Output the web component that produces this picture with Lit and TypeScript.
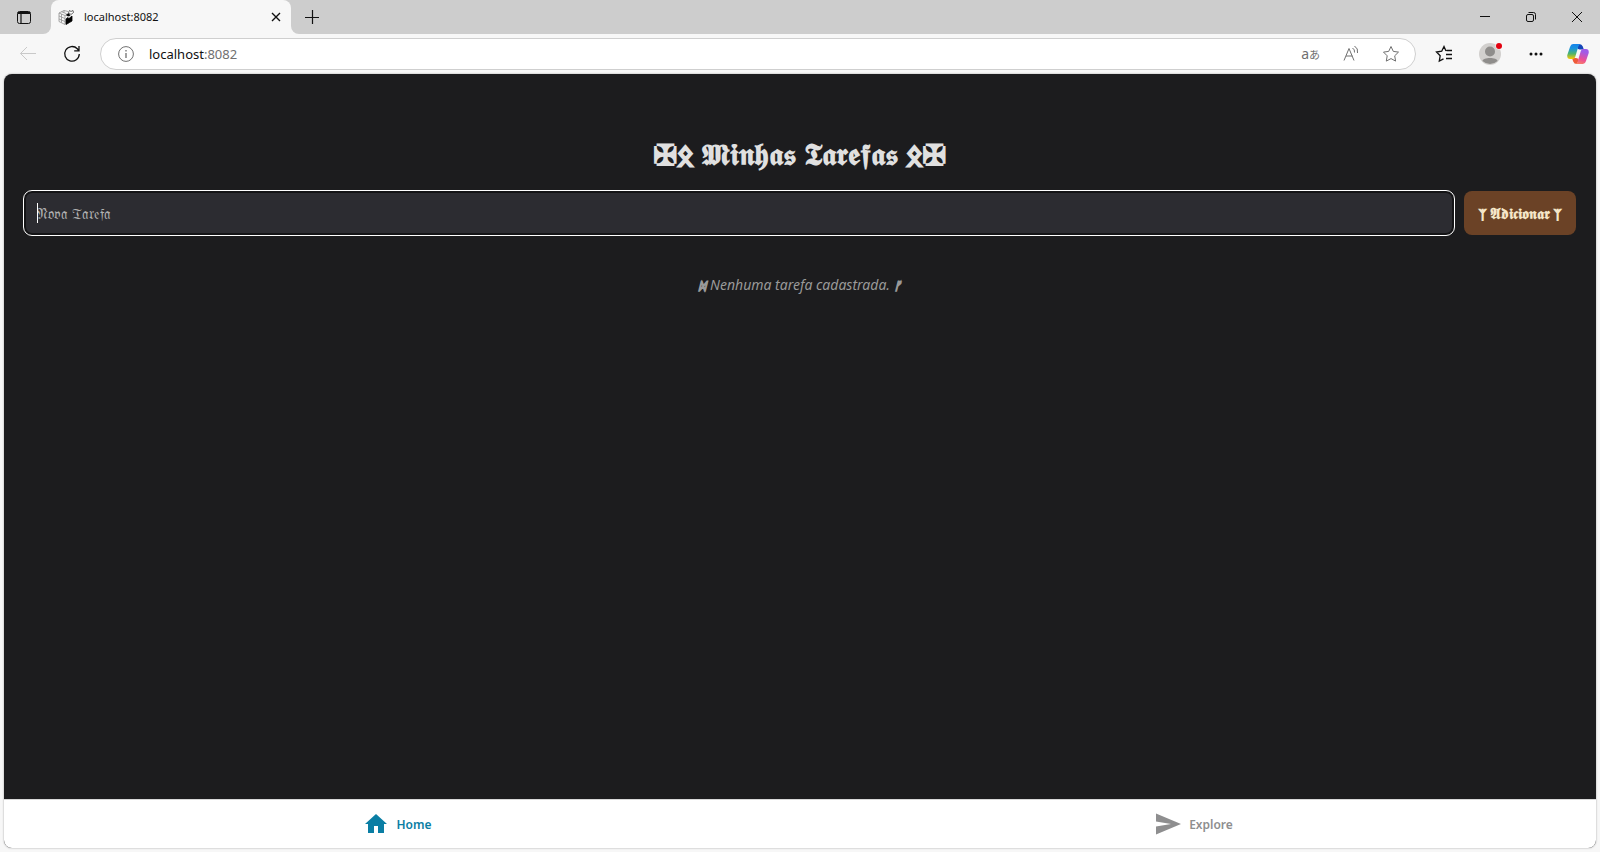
import { LitElement, html, css } from "lit";
import { customElement, query } from "lit/decorators.js";

@customElement("browser-chrome")
class BrowserChrome extends LitElement {
  static styles = css`
    :host { display: block; font-family: "Noto Sans", "Open Sans", sans-serif; color: #111; }
    button { border: 0; padding: 0; background: none; color: inherit; font: inherit; display: grid; place-items: center; }
    svg { display: block; }
    .line { fill: none; stroke: currentColor; }
    .tabs { display: flex; height: 34px; background: #f7f7f7; }
    .menu { width: 51px; border-radius: 0 0 8px 0; background: #cdcdcd; padding-right: 3px; box-sizing: border-box; }
    .tab { display: flex; align-items: center; width: 240px; box-sizing: border-box; padding: 0 9px 0 7px; gap: 9px; background: #f7f7f7; border-radius: 8px 8px 0 0; position: relative; }
    .tab::before { content: ""; position: absolute; z-index: -1; inset: 0 0 8px 0; background: #cdcdcd; }
    .tabs { isolation: isolate; }
    .title { flex: 1; font-size: 11px; line-height: 16px; padding-bottom: 1px; }
    .rest { display: flex; flex: 1; background: #cdcdcd; border-radius: 0 0 0 8px; justify-content: space-between; }
    .new { width: 42px; }
    .win { display: flex; }
    .win button { width: 46px; }
    .bar { display: flex; align-items: center; height: 40px; background: #f7f7f7; padding-right: 11px; box-sizing: border-box; }
    .back { width: 56px; color: #c9c9c9; }
    .reload { width: 32px; margin-right: 12px; }
    .address { display: flex; flex: 1; align-items: center; height: 32px; box-sizing: border-box; border: 1px solid #cfcfcf; border-radius: 16px; background: #fff; padding: 0 15px 0 17px; color: #707070; }
    .url { flex: 1; margin-left: 15px; font-size: 13px; color: #707070; }
    .url b { font-weight: 400; color: #111; }
    .tools { display: flex; align-items: center; gap: 22px; }
    .lang { display: flex; align-items: baseline; font-size: 14px; line-height: 20px; font-family: "Noto Sans", "Noto Sans CJK JP", sans-serif; }
    .lang small { font-size: 11px; }
    .side { display: flex; align-items: center; gap: 22px; margin-left: 17px; }
    .fav { width: 22px; }
    .profile { width: 26px; }
    .more { width: 20px; }
  `;
  render() {
    return html`
      <div class="tabs">
        <button class="menu" aria-label="Tab actions"><svg class="line" width="16" height="16"><rect x="1.5" y="2.500" width="13" height="12" rx="2"/><path d="M2 3.500h12M2 4.500h12M5 5v9" stroke-width="1.200"/></svg></button>
        <div class="tab">
          <svg class="line" width="17" height="17" viewBox="0 0 17 17" stroke-width=".8">
            <path d="M1 4l5-2.500 4 1M1 4v8.500l6 3M1 4l6 2.500 3-1.500M3.500 5v8.500M7 6.500v9M1 7l6 2.500M1 10l6 2.500M6 1.500v2M3.500 2.700l5 2" stroke="#909090"/>
            <path d="M8 10l2-1.500 1 1 3-2.500v5l-2.500 1.500-3.500 2z" fill="#000" stroke="#000"/>
            <path d="M8.500 6l2-1.500 1.500 2-2 .5z" fill="#000" stroke="#000"/>
            <path d="M10.500 3.500l1-2 1.500 1 2-1 .500 2-2.500 2z" fill="#fff" stroke="#444"/>
          </svg>
          <span class="title">localhost:8082</span>
          <button aria-label="Close tab"><svg class="line" width="12" height="12" stroke-width="1.400"><path d="M2 2l8 8M10 2l-8 8"/></svg></button>
        </div>
        <div class="rest">
          <button class="new" aria-label="New tab"><svg class="line" width="14" height="14"><path d="M7.500 0v14M0 7.500h14" stroke-width="1.200"/></svg></button>
          <div class="win">
            <button aria-label="Minimize"><svg class="line" width="12" height="12"><path d="M1 5.500h10"/></svg></button>
            <button aria-label="Restore"><svg class="line" width="12" height="12"><rect x="1.500" y="3.500" width="7" height="7" rx="1.500"/><path d="M3.500 1.500h5a2 2 0 0 1 2 2v5"/></svg></button>
            <button aria-label="Close"><svg class="line" width="12" height="12"><path d="M1 1l10 10M11 1L1 11"/></svg></button>
          </div>
        </div>
      </div>
      <div class="bar">
        <button class="back" aria-label="Back"><svg class="line" width="18" height="16"><path d="M17 7.500H1.500M8 1L1.500 7.500L8 14"/></svg></button>
        <button class="reload" aria-label="Reload"><svg class="line" width="18" height="18" stroke-width="1.300"><path d="M16.300 9a7.300 7.300 0 1 1-2-5.200L15.800 5.500M16 1v4.800h-4.800"/></svg></button>
        <div class="address">
          <svg class="line" width="16" height="16"><circle cx="8" cy="8" r="7.400"/><path d="M8 7v5M8 4v1.400" stroke-width="1.300"/></svg>
          <span class="url"><b>localhost</b>:8082</span>
          <div class="tools">
            <button class="lang" aria-label="Translate">a<small>あ</small></button>
            <button aria-label="Read aloud"><svg class="line" width="18" height="18"><path d="M2 15.500L7 3.500L12 15.500M4 11h6.500M10.500 3q2.500 1.500 2 4.500M12.500 1q4 2.500 3 7"/></svg></button>
            <button aria-label="Favorite"><svg class="line" width="18" height="18"><path d="M9 1.500l2.300 4.900 5.200.7-3.800 3.700.9 5.300L9 13.600l-4.700 2.500.9-5.300-3.700-3.700 5.200-.7z"/></svg></button>
          </div>
        </div>
        <div class="side">
          <button class="fav" aria-label="Favorites"><svg class="line" width="18" height="18" stroke-width="1.300"><path d="M11 6L9 1.500 6.700 6.200l-5.200.8 3.700 3.700-.9 5.300 4.200-2.200M11 9.500h6M11 13.500h6M11.500 5.500h5.500"/></svg></button>
          <button class="profile" aria-label="Profile"><svg width="26" height="24"><circle cx="13" cy="12" r="11" fill="#d2d0ce"/><circle cx="13" cy="9.500" r="5" fill="#8f8d8b"/><path d="M5.500 19c0-4 15-4 15 0a11 11 0 0 1-15 0z" fill="#8f8d8b"/><circle cx="22" cy="4" r="3.500" fill="#f7f7f7"/><circle cx="22" cy="4" r="3" fill="#e3000f"/></svg></button>
          <button class="more" aria-label="More"><svg width="18" height="16" fill="#111"><circle cx="5" cy="8" r="1.500"/><circle cx="10" cy="8" r="1.500"/><circle cx="15" cy="8" r="1.500"/></svg></button>
          <button aria-label="Copilot"><svg width="22" height="22" viewBox="0 0 22 22">
            <defs><linearGradient id="a" x2="0" y2="1"><stop stop-color="#1683ec"/><stop offset=".3" stop-color="#1a94dd"/><stop offset=".65" stop-color="#4fb56a"/><stop offset="1" stop-color="#ffc800"/></linearGradient><linearGradient id="b" x2="-.300" y2="1"><stop stop-color="#a05be8"/><stop offset=".5" stop-color="#ec4f96"/><stop offset="1" stop-color="#ff9a4d"/></linearGradient></defs>
            <path d="M12 1q3 0 3.800 2.500L16.800 6.500h-4q-2 0-2.800-2z" fill="#1545b8"/>
            <path d="M10 21q-3 0-3.800-2.500L5 15h4q2 0 2.800 2z" fill="#ee5a3a"/>
            <path d="M6 1h8q-2 .5-2.500 2L8.200 14q-.600 2-2.500 2H3Q-.200 16 .3 12L3 4q.8-3 3-3z" fill="url(#a)"/>
            <path d="M16 21H8q2-.5 2.500-2L13.800 8q.600-2 2.500-2H19q3.200 0 2.700 4L19 18q-.8 3-3 3z" fill="url(#b)"/></svg></button>
        </div>
      </div>`;
  }
}

@customElement("app-root")
class AppRoot extends LitElement {
  static styles = css`
    :host { display: flex; flex-direction: column; min-height: 100vh; background: #f7f7f7; font-family: "Noto Sans", "Open Sans", sans-serif; }
    .page { flex: 1; display: flex; flex-direction: column; margin: 0 4px 4px; border-radius: 8px; overflow: hidden; background: #1c1c1e; box-shadow: 0 0 2px #999; }
    main { flex: 1; padding: 59px 20px 20px; color: #e0e0e0; }
    h1 { margin: 0 0 16px; font-size: 30px; line-height: 42px; font-weight: 700; text-align: center; font-family: "Noto Sans", "DejaVu Sans", sans-serif; }
    .sign { font-size: 28px; -webkit-text-stroke: 2px currentColor; }
    form { display: flex; gap: 10px; }
    .field { flex: 1; min-width: 0; display: grid; position: relative; }
    .field::after { content: ""; position: absolute; left: 13px; top: 12px; width: 1px; height: 20px; background: #fff; }
    input { min-width: 0; height: 44px; box-sizing: border-box; border: 2px solid #141416; border-radius: 8px; background: #2c2c31; padding: 0 11px; color: #fff; caret-color: transparent; font: 15px "Noto Sans", "DejaVu Sans", sans-serif; outline: 1px solid #fff; }
    input::placeholder { color: #b0b0b0; opacity: 1; }
    .add { border: 0; border-radius: 8px; background: #6b4226; color: #f5e6c8; padding: 0 15px; font: 700 15px "Noto Sans", "DejaVu Sans", sans-serif; }
    .rune { font-size: 12px; -webkit-text-stroke: 1px currentColor; }
    .empty { margin: 40px 0 0; text-align: center; font-size: 14px; line-height: 20px; font-style: italic; color: #999; }
    .small { font-size: 11px; font-weight: 700; -webkit-text-stroke: 1px currentColor; }
    nav { display: flex; height: 48px; background: #fff; border-top: 1px solid #d8d8d8; }
    nav a { flex: 1; display: flex; align-items: center; justify-content: center; gap: 8px; padding-right: 8px; font-size: 12px; font-weight: 600; text-decoration: none; color: #8e8e8f; }
    nav a.on { color: #0a7ea4; }
  `;
  @query("input") field!: HTMLInputElement;
  firstUpdated() {
    this.field.focus();
  }
  render() {
    return html`
      <browser-chrome></browser-chrome>
      <div class="page">
        <main>
          <h1><span class="sign">✠ᛟ</span> 𝕸𝖎𝖓𝖍𝖆𝖘 𝕿𝖆𝖗𝖊𝖋𝖆𝖘 <span class="sign">ᛟ✠</span></h1>
          <form @submit=${(e: Event) => e.preventDefault()}>
            <label class="field"><input aria-label="Nova Tarefa" placeholder="𝔑𝔬𝔳𝔞 𝔗𝔞𝔯𝔢𝔣𝔞" /></label>
            <button class="add"><span class="rune">ᛉ</span> 𝕬𝖉𝖎𝖈𝖎𝖔𝖓𝖆𝖗 <span class="rune">ᛉ</span></button>
          </form>
          <p class="empty"><span class="small">ᛞ</span> Nenhuma tarefa cadastrada. <span class="small">ᚠ</span></p>
        </main>
        <nav>
          <a class="on" href="#home"><svg width="24" height="24" viewBox="0 0 24 24" fill="currentColor"><path d="M10 21v-7h4v7h6v-9h3L12 2 1 12h3v9z"/></svg>Home</a>
          <a href="#explore"><svg width="26" height="24" viewBox="0 0 26 24" fill="currentColor"><path d="M1 1.500l25 10.500L1 22.500v-8L16 12 1 9.500z"/></svg>Explore</a>
        </nav>
      </div>`;
  }
}
